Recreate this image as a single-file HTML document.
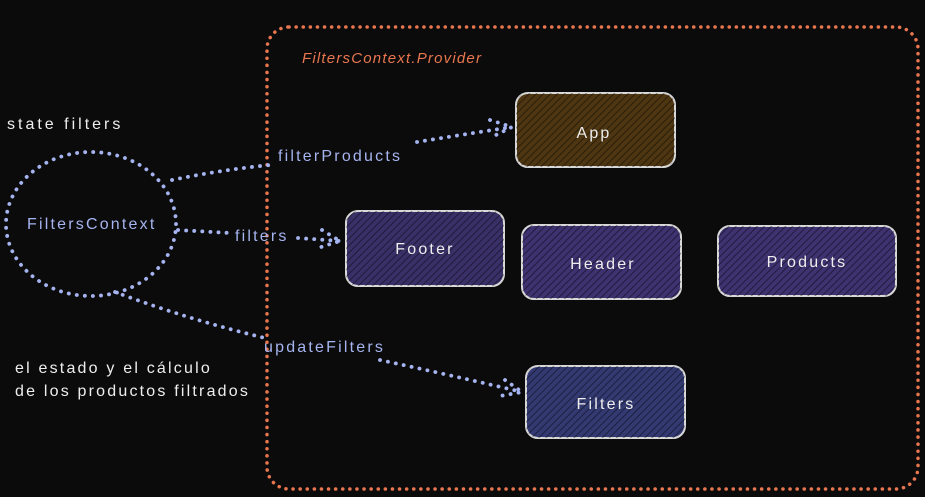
<!DOCTYPE html>
<html><head><style>
html,body{margin:0;padding:0;background:#0c0b0b;}
svg{display:block}
text{font-family:"Liberation Sans",sans-serif;font-size:16px;letter-spacing:2.2px;}
</style></head><body>
<svg width="925" height="497" viewBox="0 0 925 497">
<defs>
<pattern id="h" width="5" height="5" patternUnits="userSpaceOnUse" patternTransform="rotate(45)">
<rect width="5" height="5" fill="none"/><line x1="0" y1="0" x2="0" y2="5" stroke="#000" stroke-opacity="0.45" stroke-width="2"/>
</pattern>
</defs>
<rect x="0" y="0" width="925" height="497" fill="#0c0b0b"/>
<rect x="267" y="27" width="651" height="462" rx="22" fill="none" stroke="#e8764f" stroke-width="3.5" stroke-dasharray="0.1 7" stroke-linecap="round"/>
<text x="302" y="63" fill="#e8764f" style="font-size:15px;letter-spacing:1.2px" font-style="italic">FiltersContext.Provider</text>

<g stroke="#d8d8d8" stroke-width="2">
<rect x="516" y="93" width="159" height="74" rx="12" fill="#4d3611"/>
<rect x="346" y="211" width="158" height="75" rx="12" fill="#3a3068"/>
<rect x="522" y="225" width="159" height="74" rx="12" fill="#3e3270"/>
<rect x="718" y="226" width="178" height="70" rx="12" fill="#3e3270"/>
<rect x="526" y="366" width="159" height="72" rx="12" fill="#333a72"/>
</g>
<g fill="url(#h)">
<rect x="516" y="93" width="159" height="74" rx="12"/>
<rect x="346" y="211" width="158" height="75" rx="12"/>
<rect x="522" y="225" width="159" height="74" rx="12"/>
<rect x="718" y="226" width="178" height="70" rx="12"/>
<rect x="526" y="366" width="159" height="72" rx="12"/>
</g>
<g fill="#eee" text-anchor="middle">
<text x="594" y="138">App</text>
<text x="425" y="254">Footer</text>
<text x="603" y="269">Header</text>
<text x="807" y="267">Products</text>
<text x="606" y="409">Filters</text>
</g>

<g fill="none" stroke="#a5b4f0" stroke-width="3.8" stroke-dasharray="0.1 8" stroke-linecap="round">
<ellipse cx="91" cy="224" rx="85" ry="72"/>
<path d="M172 180 Q220 170 270 165"/>
<path d="M417 142 Q460 135 512 127"/>
<path d="M490 120 L512 127 L494 136"/>
<path d="M178 230 L230 233"/>
<path d="M298 238 L340 241"/>
<path d="M322 230 L340 241 L318 248"/>
<path d="M115 292 Q190 320 265 338"/>
<path d="M380 360 Q450 375 522 392"/>
<path d="M505 380 L522 392 L500 396"/>
</g>
<g fill="#a5b4f0">
<text x="278" y="161">filterProducts</text>
<text x="27" y="229">FiltersContext</text>
<text x="235" y="241">filters</text>
<text x="264" y="352">updateFilters</text>
</g>
<g fill="#eee">
<text x="7" y="129" style="letter-spacing:3px">state filters</text>
<text x="15" y="373">el estado y el cálculo</text>
<text x="15" y="396">de los productos filtrados</text>
</g>
</svg>
</body></html>
